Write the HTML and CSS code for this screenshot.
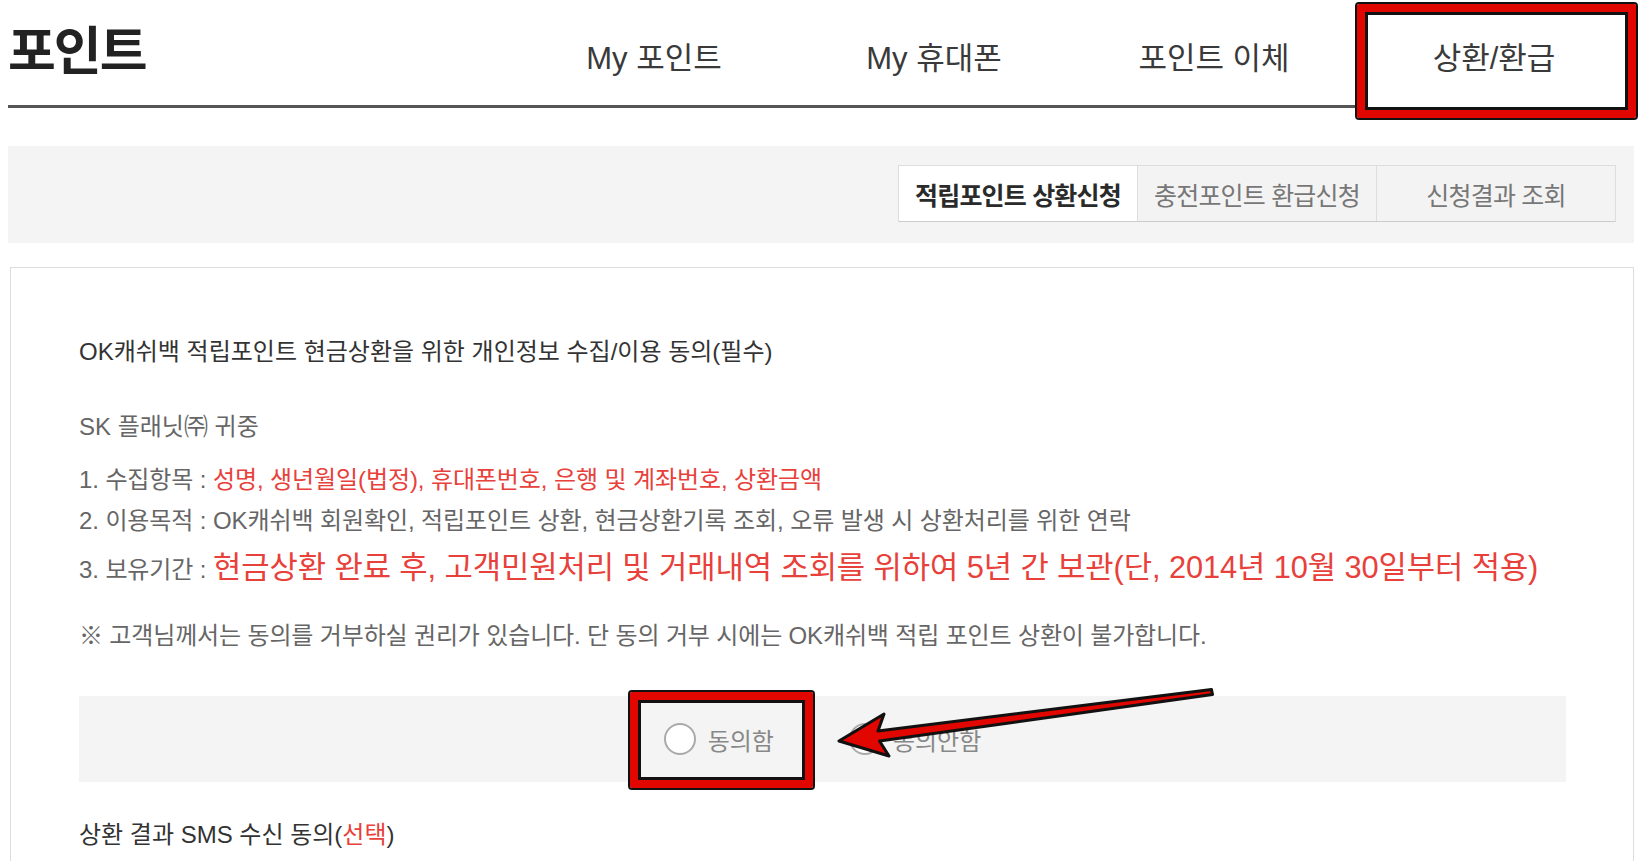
FILE: index.html
```html
<!DOCTYPE html>
<html lang="ko">
<head>
    <meta charset="UTF-8">
    <meta name="viewport" content="width=device-width, initial-scale=1.0">
    <title>포인트 - 상환/환급</title>
    <link rel="stylesheet" href="styles.css">
</head>
<body>
    <div class="page">
        <header class="top">
            <h1 class="title">포인트</h1>
            <nav class="gnb">
                <a class="gnb-item">My 포인트</a>
                <a class="gnb-item">My 휴대폰</a>
                <a class="gnb-item">포인트 이체</a>
                <a class="gnb-item is-active"><span>상환/환급</span></a>
            </nav>
        </header>

        <div class="sub-bar">
            <ul class="sub-tabs">
                <li class="sub-tab is-active">적립포인트 상환신청</li>
                <li class="sub-tab">충전포인트 환급신청</li>
                <li class="sub-tab">신청결과 조회</li>
            </ul>
        </div>

        <section class="agree-box">
            <h2 class="agree-title">OK캐쉬백 적립포인트 현금상환을 위한 개인정보 수집/이용 동의(필수)</h2>
            <p class="to">SK 플래닛㈜ 귀중</p>
            <ul class="terms">
                <li>1. 수집항목 : <span class="red">성명, 생년월일(법정), 휴대폰번호, 은행 및 계좌번호, 상환금액</span></li>
                <li>2. 이용목적 : OK캐쉬백 회원확인, 적립포인트 상환, 현금상환기록 조회, 오류 발생 시 상환처리를 위한 연락</li>
                <li class="big">3. 보유기간 : <span class="red">현금상환 완료 후, 고객민원처리 및 거래내역 조회를 위하여 5년 간 보관(단, 2014년 10월 30일부터 적용)</span></li>
            </ul>
            <p class="notice">※ 고객님께서는 동의를 거부하실 권리가 있습니다. 단 동의 거부 시에는 OK캐쉬백 적립 포인트 상환이 불가합니다.</p>

            <div class="choice">
                <label class="radio marked"><span class="circle"></span>동의함</label>
                <label class="radio"><span class="circle"></span>동의안함</label>
            </div>

            <h2 class="agree-title sms">상환 결과 SMS 수신 동의(<span class="red">선택</span>)</h2>
        </section>
    </div>

    <!-- annotation arrow -->
    <svg class="arrow" width="1640" height="861" viewBox="0 0 1640 861">
        <polygon points="839,741 884,714 878,731 1211.5,689.5 1212.5,694.5 879.5,741 889,756"
                 fill="#e10600" stroke="#111" stroke-width="3" stroke-linejoin="round"/>
    </svg>
</body>
</html>
```

FILE: styles.css
```css
html, body {
    margin: 0;
    overflow: hidden;
}
body {
    position: relative;
    font-family: "Liberation Sans", "Noto Sans CJK KR", sans-serif;
    color: #666;
    background: #fff;
}
.page {
    width: 1626px;
    margin-left: 8px;
}

/* header */
.top {
    display: flex;
    height: 105px;
    border-bottom: 3px solid #555;
}
.title {
    margin: 0;
    font-size: 52px;
    line-height: 104px;
    font-weight: bold;
    letter-spacing: -2px;
    color: #222;
}
.gnb {
    display: flex;
    margin-left: auto;
}
.gnb-item {
    position: relative;
    width: 280px;
    display: flex;
    align-items: center;
    justify-content: center;
    padding-top: 6px;
    box-sizing: border-box;
    font-size: 31px;
    color: #3a3a3a;
}
.gnb-item span {
    position: relative;
    z-index: 1;
}
.gnb-item.is-active::before {
    content: "";
    position: absolute;
    top: 4px;
    left: 3px;
    right: -2px;
    bottom: -13px;
    border: 8px solid #e10600;
    outline: 2px solid #111;
    box-shadow: inset 0 0 0 3px #111;
    background: #fff;
    border-radius: 2px;
}

/* sub tabs */
.sub-bar {
    display: flex;
    justify-content: flex-end;
    align-items: center;
    height: 97px;
    margin-top: 38px;
    padding-right: 18px;
    background: #f4f4f4;
}
.sub-tabs {
    display: flex;
    margin: 0 0 2px;
    padding: 0;
    list-style: none;
    border: 1px solid #ddd;
    border-bottom-color: #ccc;
}
.sub-tab {
    width: 238px;
    height: 55px;
    display: flex;
    align-items: center;
    justify-content: center;
    font-size: 25px;
    letter-spacing: -0.8px;
    color: #777;
    background: #f3f3f3;
    border-left: 1px solid #ddd;
}
.sub-tab:first-child {
    border-left: 0;
}
.sub-tab.is-active {
    background: #fff;
    color: #2a2a2a;
    font-weight: bold;
}

/* agreement */
.agree-box {
    margin-top: 24px;
    margin-left: 2px;
    padding: 69px 67px 60px 68px;
    border: 1px solid #ddd;
}
.agree-title {
    margin: 0;
    font-size: 24px;
    line-height: 30px;
    font-weight: normal;
    color: #333;
}
.to {
    margin: 45px 0 0;
    font-size: 24px;
    line-height: 30px;
}
.terms {
    margin: 17px 0 0;
    padding: 0;
    list-style: none;
    font-size: 24px;
    letter-spacing: -0.1px;
    line-height: 41px;
}
.terms .big .red {
    font-size: 30.8px;
    line-height: 54px;
}
.red {
    color: #e8403a;
}
.notice {
    margin: 26px 0 0;
    font-size: 24px;
    letter-spacing: -0.15px;
    line-height: 30px;
}
.choice {
    display: flex;
    justify-content: center;
    align-items: center;
    gap: 75px;
    height: 86px;
    margin-top: 45px;
    background: #f4f4f4;
}
.radio {
    position: relative;
    display: flex;
    align-items: center;
    gap: 12px;
    height: 32px;
    font-size: 24px;
    color: #888;
}
.circle {
    width: 28px;
    height: 28px;
    border: 2px solid #aaa;
    border-radius: 50%;
    background: #fff;
}
.radio.marked::before {
    content: "";
    position: absolute;
    top: -31px;
    left: -34px;
    right: -39px;
    bottom: -33px;
    border: 8px solid #e10600;
    outline: 2px solid #111;
    box-shadow: inset 0 0 0 3px #111;
    border-radius: 2px;
}
.sms {
    margin-top: 38px;
}

.arrow {
    position: absolute;
    top: 0;
    left: 0;
    pointer-events: none;
}
```
